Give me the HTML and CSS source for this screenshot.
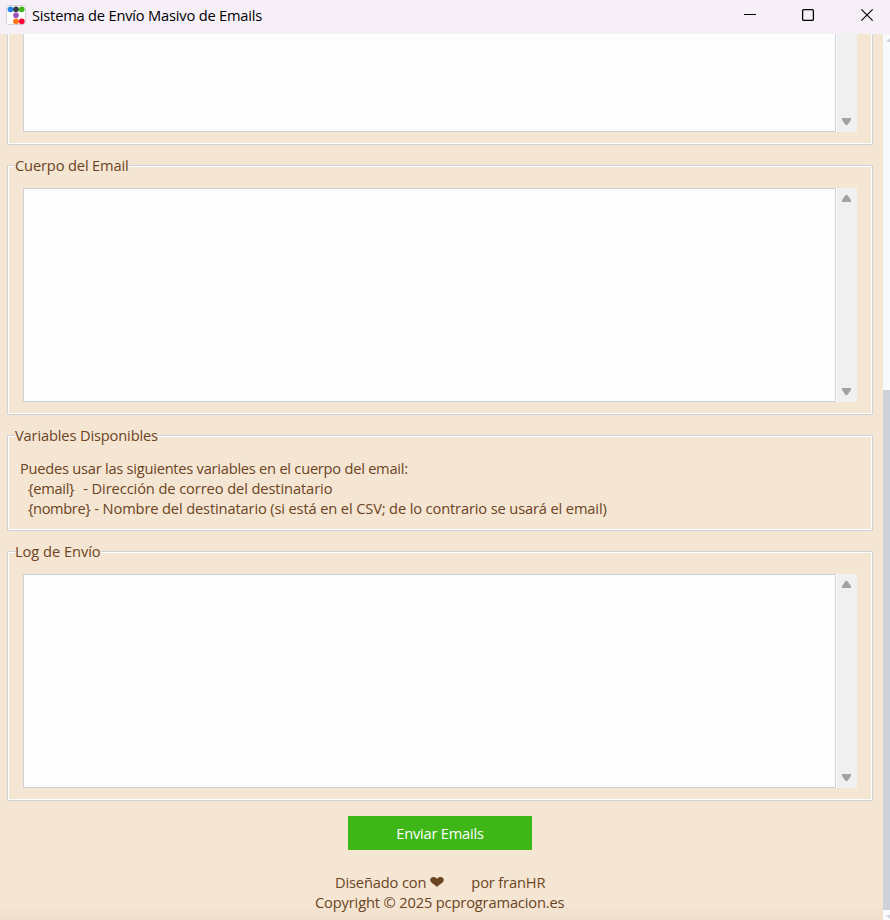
FILE: index.html
```html
<!DOCTYPE html>
<html lang="es">
<head>
<meta charset="utf-8">
<title>Sistema de Envío Masivo de Emails</title>
<link rel="stylesheet" href="styles.css">
</head>
<body>
<div class="window">
  <header class="titlebar">
    <svg class="app-icon" width="20" height="20" viewBox="0 0 20 20">
      <rect x=".5" y=".5" width="19" height="19" rx="2" fill="#fff" stroke="#d3d0d3"/>
      <circle cx="4.5" cy="4.3" r="2.9" fill="#2684e8"/>
      <circle cx="10" cy="4.3" r="2.9" fill="#343a46"/>
      <circle cx="15.7" cy="4.3" r="2.9" fill="#3fb618"/>
      <circle cx="10" cy="10.3" r="2.8" fill="#9954bb"/>
      <circle cx="10" cy="16.3" r="2.9" fill="#ff7518"/>
      <circle cx="15.8" cy="16.3" r="2.9" fill="#ff0039"/>
    </svg>
    <h1 class="title">Sistema de Envío Masivo de Emails</h1>
    <svg class="controls" width="130" height="14" viewBox="0 0 130 14" fill="none" stroke="#000">
      <path d="M0 6.5h12" shape-rendering="crispEdges"/>
      <rect x="58.6" y="1.6" width="10.8" height="10.8" rx="1.2" stroke-width="1.3"/>
      <path d="M117.3 1.3l11.4 11.4M128.7 1.3l-11.4 11.4" stroke-width="1.15"/>
    </svg>
  </header>
  <div class="viewport">
    <main class="content">
      <section class="frame frame-cut">
        <div class="field">
          <div class="textarea"></div>
          <div class="scroll scroll-cut"><i class="down"></i></div>
        </div>
      </section>
      <section class="frame frame-field">
        <h2 class="legend">Cuerpo del Email</h2>
        <div class="field">
          <div class="textarea"></div>
          <div class="scroll"><i class="up"></i><i class="down"></i></div>
        </div>
      </section>
      <section class="frame frame-vars">
        <h2 class="legend">Variables Disponibles</h2>
        <div class="vars">
          <p class="intro">Puedes usar las siguientes variables en el cuerpo del email:</p>
          <p class="item item-email"><span class="key">{email}</span><span>- Dirección de correo del destinatario</span></p>
          <p class="item"><span class="key">{nombre}</span><span>- Nombre del destinatario (si está en el CSV; de lo contrario se usará el email)</span></p>
        </div>
      </section>
      <section class="frame frame-field">
        <h2 class="legend legend-log">Log de Envío</h2>
        <div class="field">
          <div class="textarea"></div>
          <div class="scroll"><i class="up"></i><i class="down"></i></div>
        </div>
      </section>
      <button class="send">Enviar Emails</button>
      <footer class="footer">
        <p class="credit"><span>Diseñado con</span><svg class="heart" width="14" height="10" viewBox="0 0 14 10"><path d="M7 10C5.500 8 .2 6 .2 3.100.2-.6 5.200-.8 7 2 8.800-.8 13.800-.6 13.800 3.100 13.800 6 8.500 8 7 10z" fill="#6b4423"/></svg><span>por franHR</span></p>
        <p class="copy">Copyright © 2025 pcprogramacion.es</p>
      </footer>
    </main>
    <div class="page-scroll"><i class="page-up"></i><div class="thumb"></div><i class="page-down"></i></div>
  </div>
</div>
</body>
</html>
```
FILE: styles.css
```css
* { box-sizing: border-box; margin: 0; padding: 0; }
body {
  font: 14.67px/20px "Open Sans", "Noto Sans", sans-serif;
  letter-spacing: -0.15px;
  color: #6b4423;
  background: #f5e6d3;
}
.window { width: 890px; height: 920px; display: flex; flex-direction: column; overflow: hidden; }
.titlebar { height: 34px; flex: none; display: flex; align-items: flex-start; padding: 5px 16px 0 6px; background: #f6eff8; color: #000; }
.title { flex: 1; margin-left: 6px; font-size: 14.67px; font-weight: 400; line-height: 20px; letter-spacing: -0.2px; }
.controls { margin-top: 3px; }
.viewport { flex: 1; display: flex; min-height: 0; }
.content { width: 883px; padding: 0 10px 0 7px; display: flex; flex-direction: column; background: linear-gradient(#f5e6d3 870px, #efdfcc 886px); }
.frame { position: relative; flex: none; border: 1px solid #cdd1da; box-shadow: inset 0 0 0 1px #fff; margin-bottom: 20px; padding: 22px 15px 0 15px; border-radius: 1px; }
.frame-cut { height: 111px; border-top: 0; padding-top: 0; box-shadow: inset 1px -1px 0 #fff, inset -1px 0 0 #fff; }
.frame-field { height: 250px; }
.frame-vars { height: 96px; padding: 22px 12px 0; }
.legend { position: absolute; left: 7px; top: -11px; height: 20px; background: #f5e6d3; font-size: inherit; font-weight: 400; white-space: nowrap; }
.legend-log { letter-spacing: -0.05px; }
.field { display: flex; height: 214px; }
.frame-cut .field { height: 98px; }
.textarea { width: 813px; background: #fdfdfd; border: 1px solid #cdd1da; }
.frame-cut .textarea { border-top: 0; }
.scroll { width: 21px; border-left: 1px solid #fdfdfd; background: #f0f0f0; display: flex; flex-direction: column; justify-content: space-between; align-items: center; padding: 7px 1px 7px 0; }
.scroll-cut { justify-content: flex-end; }
.up, .down { width: 9px; height: 7px; background: #a3a3a3; clip-path: polygon(40% 0, 60% 0, 100% 70%, 100% 100%, 0 100%, 0 70%); }
.down { transform: scaleY(-1); }
.vars p { white-space: nowrap; }
.vars .intro { letter-spacing: -0.25px; }
.vars .item { display: flex; padding-left: 8px; letter-spacing: -0.14px; }
.vars .item-email { letter-spacing: -0.1px; }
.key { margin-right: 4px; letter-spacing: -0.4px; }
.item-email .key { margin-right: 9px; letter-spacing: -0.3px; }
.send { flex: none; width: 184px; height: 34px; margin: -5px 0 0 341px; border: 0; background: #3fb618; color: #fff; font: inherit; letter-spacing: -0.22px; }
.footer { margin-top: 22px; }
.credit { display: flex; align-items: center; padding-left: 328px; }
.heart { margin: 0 27px 0 4px; }
.copy { padding-left: 308px; }
.page-scroll { width: 7px; display: flex; flex-direction: column; background: #f8fafc; overflow: hidden; }
.page-up, .page-down { flex: none; width: 10px; height: 4px; margin: 4px 0 0 3px; background: #cdd1da; clip-path: polygon(40% 0, 60% 0, 100% 100%, 0 100%); }
.thumb { flex: none; height: 520px; margin-top: 348px; background: #cdd1da; }
.page-down { margin-top: 5px; transform: scaleY(-1); }
```
